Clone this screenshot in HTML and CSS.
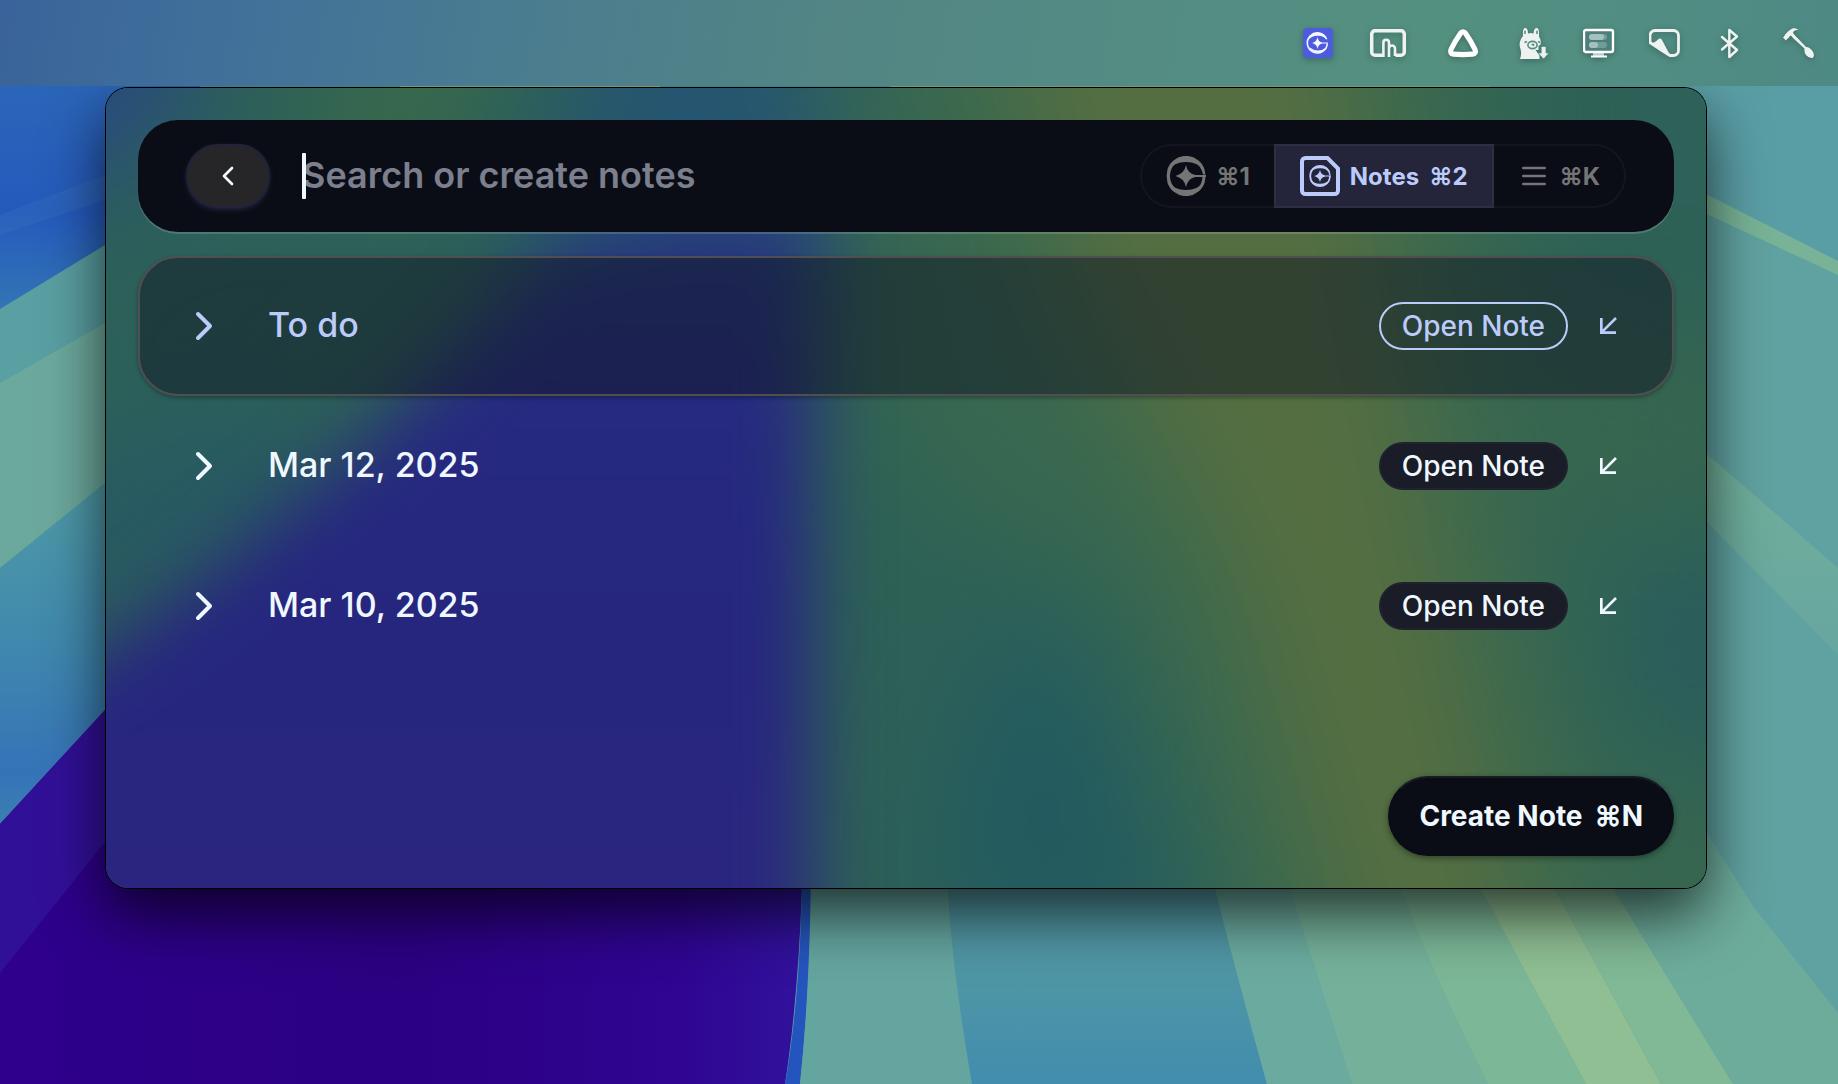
FILE: index.html
```html
<!DOCTYPE html>
<html lang="en">
<head>
<meta charset="utf-8">
<title>Notes</title>
<meta name="viewport" content="width=device-width, initial-scale=1">
<link rel="stylesheet" href="styles.css">
</head>
<body>
<svg class="wallpaper" viewBox="0 0 1838 1084" preserveAspectRatio="none" aria-hidden="true">
  <defs>
    <linearGradient id="sky" x1="0" y1="0" x2="0" y2="1"><stop offset="0" stop-color="#2c66b8"/><stop offset=".55" stop-color="#255abd"/><stop offset="1" stop-color="#3478b4"/></linearGradient>
    <linearGradient id="sea" x1="0" y1="0" x2="0" y2="1"><stop offset="0" stop-color="#4f9ba6"/><stop offset=".5" stop-color="#3f87ae"/><stop offset=".85" stop-color="#3573b8"/><stop offset="1" stop-color="#3a80b0"/></linearGradient>
    <linearGradient id="deep" x1="0" y1="0" x2="1" y2="0"><stop offset="0" stop-color="#2e008c"/><stop offset=".5" stop-color="#2c0082"/><stop offset=".85" stop-color="#2f0592"/><stop offset="1" stop-color="#31129c"/></linearGradient>
    <linearGradient id="edge" x1="0" y1="0" x2="1" y2="0"><stop offset="0" stop-color="#64a5a0"/><stop offset="1" stop-color="#5298a8"/></linearGradient>
    <linearGradient id="mid" x1="0" y1="0" x2="0" y2="1"><stop offset="0" stop-color="#5499a2"/><stop offset=".5" stop-color="#4e96a6"/><stop offset="1" stop-color="#428cae"/></linearGradient>
    <linearGradient id="fade" x1="0" y1="0" x2="0" y2="1"><stop offset="0" stop-color="#72b09a"/><stop offset="1" stop-color="#66a6a0"/></linearGradient>
  </defs>
  <rect width="1838" height="1084" fill="#60a2a1"/>
  <path d="M0 80H940V320H0Z" fill="url(#sky)"/>
  <path d="M0 215 105 175V200L0 235Z" fill="#3a74b8" opacity=".3"/>
  <path d="M0 309 105 245 400 90H840V700H0Z" fill="#5a9fa2"/>
  <path d="M0 383 105 323 V483L0 568Z" fill="#6ca99d"/>
  <path d="M0 568 105 483V710L0 824Z" fill="url(#sea)"/>
  <path d="M0 824 105 710H802V888Q798 1000 785 1084H0Z" fill="url(#deep)"/>
  <path d="M0 824 105 710V842L0 973Z" fill="#311098"/>
  <path d="M802 880H811Q809 1000 800 1084H785Q800 1000 802 880Z" fill="#2455be"/>
  <path d="M811 880H947Q952 970 972 1084H800Q811 980 811 880Z" fill="#65a59f"/>
  <path d="M947 880H1213Q1230 950 1267 1084H972Q952 970 947 880Z" fill="url(#mid)"/>
  <path d="M1213 880H1287L1352 1084H1267Q1230 950 1213 880Z" fill="#6bab9f"/>
  <path d="M1287 880H1397Q1435 980 1488 1084H1352Z" fill="#75b19a"/>
  <path d="M1397 880H1476L1586 1084H1488Q1435 980 1397 880Z" fill="#7cb797"/>
  <path d="M1476 880H1550L1661 1084H1586Z" fill="#8fbf93"/>
  <path d="M1550 880H1608L1733 1084H1661Z" fill="#81b895"/>
  <path d="M1608 880 1700 822 1755 909 1838 1013V1084H1733Z" fill="#6dac9b"/>
  <path d="M940 80H1838V261L1706 194Z" fill="url(#edge)"/>
  <path d="M1500 86H1838V261L1706 194 1500 100Z" fill="#5a9ea5"/>
  <path d="M1700 191 1838 261V275L1700 211Z" fill="#78b397"/>
  <path d="M1700 448 1838 568V655L1700 515Z" fill="url(#fade)"/>
  <path d="M200 86H890V90H200Z" fill="#4a8f9c"/>
  <path d="M400 86H660V90H400ZM890 86H1490V90H890Z" fill="#7fb092"/>
</svg>

<header class="menubar">
  <svg class="menu-icon" width="32" height="32" viewBox="0 0 32 32"><rect x="0" y="1" width="30" height="30" rx="4" fill="#4c5cdc"/><path d="M24.500 13.500A10 10 0 0 0 5 13.500A11 9 0 0 1 24.500 13.500Z" fill="#f4f6ff"/><path d="M24.300 16.500A10 10 0 1 1 23.500 12" fill="none" stroke="#f4f6ff" stroke-width="1.600"/><path d="M6 20A10 10 0 0 0 24 20Q15 27 6 20Z" fill="#f4f6ff"/><path d="M14.500 10Q15.200 15 19.500 15.500H25V16.500H19.500Q15.200 17 14.500 22Q13.800 17 9 16Q13.800 15 14.500 10Z" fill="#f4f6ff"/></svg>
  <svg class="menu-icon" width="42" height="32" viewBox="0 0 42 32" fill="none" stroke="#eef3f2" stroke-width="3.500"><path d="M14 28.200H6a3.300 3.300 0 0 1-3.300-3.300V7A3.300 3.300 0 0 1 6 3.700H32A3.300 3.300 0 0 1 35.300 7V25A3.300 3.300 0 0 1 32 28.200H26.500"/><path d="M14.400 30V15.500a2.800 2.800 0 0 1 5.600 0V30M20 24V21.500a3 3 0 0 1 6 0V29" stroke-width="2.600"/></svg>
  <svg class="menu-icon" width="36" height="32" viewBox="0 0 36 32"><path d="M18 4.800C19 4.800 20 5.400 20.600 6.400C23.500 10.500 27.500 17 30 22.500C31.200 25.200 29.800 27 27.600 27.200Q18 28 8.400 27.200C6.200 27 4.800 25.200 6 22.500C8.500 17 12.500 10.500 15.400 6.400C16 5.400 17 4.800 18 4.800Z" fill="none" stroke="#fff" stroke-width="5.200"/></svg>
  <svg class="menu-icon" width="34" height="32" viewBox="0 0 34 32"><path d="M5 32Q7 27 5.500 22Q3.500 17 6 12Q7 10 8 9Q7.500 1 10 1Q13 1 13 6.500Q15.500 5.500 18.500 6.500Q19 .5 22 1Q24.500 1.500 24 9.500Q26.500 13 25.500 17.500L23.500 19V23H20.500L24.500 28.500V32Z" fill="#edf2f1"/><path d="M10 3.800V7M22 3.800V7" stroke="#558d84" stroke-width="1.600"/><ellipse cx="17.500" cy="18" rx="4.600" ry="3.600" fill="none" stroke="#558d84" stroke-width="1.600"/><path d="M9.500 15.500 12 14.500M23 14.500 25 15.500M16.500 17.500H18.500V19" stroke="#558d84" stroke-width="1.500" fill="none"/><path d="M26.200 19.500H31V26H34L28.600 32 23 26H26.200Z" fill="#edf2f1" stroke="#558d84" stroke-width=".8"/></svg>
  <svg class="menu-icon" width="32" height="32" viewBox="0 0 32 32"><path d="M10 26H21V29H10Z" fill="#b8cfca"/><rect x="1" y="3" width="29" height="22" rx="2" fill="#4a8079" stroke="#fff" stroke-width="2.400"/><rect x="6" y="7" width="18" height="6" rx="3" fill="#6d9d96"/><rect x="6" y="7" width="15" height="6" rx="3" fill="#a6c1bd"/><rect x="6" y="15" width="18" height="6" rx="3" fill="#6d9d96"/><rect x="6" y="15" width="9" height="6" rx="3" fill="#a6c1bd"/><path d="M8 29.500H24" stroke="#fff" stroke-width="2"/></svg>
  <svg class="menu-icon" width="32" height="32" viewBox="0 0 32 32"><path d="M1 15.500V8.500A5 5 0 0 1 6 3.500H24.500A5 5 0 0 1 29.500 8.500V23.500A5 5 0 0 1 24.500 28.500H21Q15 25 1 15.500Z" fill="none" stroke="#eef3f2" stroke-width="2.800" stroke-linejoin="round"/><path d="M1 16.500Q6 16 9 12.500Q11.500 10.500 13 13L21.500 29Q11 23.500 1 16.500Z" fill="#eef3f2"/></svg>
  <svg class="menu-icon" width="30" height="32" viewBox="0 0 30 32"><path d="M7 10 22 23 14.300 30V3L22 9.500 7 22.500" fill="none" stroke="#eef3f2" stroke-width="2.400" stroke-linejoin="round" stroke-linecap="round"/></svg>
  <svg class="menu-icon" width="36" height="32" viewBox="0 0 36 32"><path d="M5 9.500Q9 3 14 1.300Q17 .8 19.500 2.800Q14 3 14 6L16 8.500 27 20Q31 20 34 25Q36 29 33.500 31Q30 31.500 27 28Q25 25 25.500 21.500L14 11 12 8.500Q10 9 9.500 11L8 12 7 13.500 4 10.500Z" fill="#eef3f2"/></svg>
</header>

<main class="panel">
  <svg class="glass" viewBox="0 0 1600 800" preserveAspectRatio="none" aria-hidden="true">
    <defs>
      <filter id="soft" x="-30%" y="-30%" width="160%" height="160%" color-interpolation-filters="sRGB"><feGaussianBlur stdDeviation="36"/></filter>
      <filter id="softer" x="-30%" y="-30%" width="160%" height="160%" color-interpolation-filters="sRGB"><feGaussianBlur stdDeviation="56"/></filter>
      <linearGradient id="indigo" x1="0" y1="0" x2="0" y2="1"><stop offset="0" stop-color="#27387f"/><stop offset=".22" stop-color="#262a80"/><stop offset=".5" stop-color="#26267f"/><stop offset="1" stop-color="#2d2680"/></linearGradient>
    </defs>
    <rect width="1600" height="800" fill="#2e6157"/>
    <g filter="url(#softer)">
      <path d="M-150-150H120L60 60-150 140Z" fill="#284a80"/>
      <path d="M320-150H430L330 60 200 260-100 330V250L180 130Z" fill="#3d6c48"/>
      <path d="M60 100 420 90 300 260 60 360-100 350V240Z" fill="#2c6059"/>
      <path d="M500-150H720V200H420Z" fill="#255570"/>
      <path d="M-100 420 150 330 250 400-100 540Z" fill="#265866"/>
      <path d="M700-150H1380L1420 200 1460 500 1560 950H1130L980 500 800 400 740 160Z" fill="#386850"/>
      <path d="M870-150H1230L1290 200 1350 500 1450 950H1250L1120 500 960 200Z" fill="#546e41"/>
      <path d="M830 800 860 640 940 500 1020 640 1100 850H830Z" fill="#225a60"/>
      <path d="M1380 250H1650V430H1420Z" fill="#37664f"/>
      <ellipse cx="1600" cy="560" rx="70" ry="60" fill="#285a60"/>
      <path d="M1500 700H1700V900H1500Z" fill="#37664f"/>
    </g>
    <path filter="url(#soft)" d="M-150 650 0 560 128 465 246 366 363 250 440 165 560 130 706 130V950H-150Z" fill="url(#indigo)"/>
  </svg>

  <div class="searchbar">
    <button class="back" type="button" aria-label="Back"><svg width="32" height="32" viewBox="0 0 24 24" class="line"><path d="m15 18-6-6 6-6"/></svg></button>
    <div class="field">
      <input class="query" type="text" aria-label="Search or create notes" placeholder="Search or create notes">
      <span class="caret"></span>
    </div>
    <nav class="tabs" aria-label="Views">
      <button class="tab" type="button" aria-label="Assistant"><svg width="40" height="40" viewBox="0 0 40 40"><use href="#orbit"/></svg><span>⌘1</span></button>
      <button class="tab tab-active" type="button"><svg width="40" height="40" viewBox="0 0 40 40"><path d="M5.500 2H27.500L38 12.500V34.500A3.500 3.500 0 0 1 34.500 38H5.500A3.500 3.500 0 0 1 2 34.500V5.500A3.500 3.500 0 0 1 5.500 2Z" fill="none" stroke="currentColor" stroke-width="4"/><g transform="translate(9 9) scale(.55)"><use href="#orbit"/></g></svg><span>Notes</span><span>⌘2</span></button>
      <button class="tab" type="button" aria-label="Menu"><svg width="32" height="32" viewBox="0 0 24 24" class="line"><path d="M4 6h16M4 12h16M4 18h16"/></svg><span>⌘K</span></button>
    </nav>
  </div>

  <ul class="notes">
    <li class="note note-selected">
      <svg width="48" height="48" viewBox="0 0 24 24" class="line"><path d="m9 18 6-6-6-6"/></svg>
      <span class="title">To do</span>
      <button class="open" type="button">Open Note</button>
      <svg width="32" height="32" viewBox="0 0 24 24" class="line arrow"><path d="M18 6 7 17M18 17H7V6"/></svg>
    </li>
    <li class="note">
      <svg width="48" height="48" viewBox="0 0 24 24" class="line"><path d="m9 18 6-6-6-6"/></svg>
      <span class="title">Mar 12, 2025</span>
      <button class="open" type="button">Open Note</button>
      <svg width="32" height="32" viewBox="0 0 24 24" class="line arrow"><path d="M18 6 7 17M18 17H7V6"/></svg>
    </li>
    <li class="note">
      <svg width="48" height="48" viewBox="0 0 24 24" class="line"><path d="m9 18 6-6-6-6"/></svg>
      <span class="title">Mar 10, 2025</span>
      <button class="open" type="button">Open Note</button>
      <svg width="32" height="32" viewBox="0 0 24 24" class="line arrow"><path d="M18 6 7 17M18 17H7V6"/></svg>
    </li>
  </ul>

  <footer class="actions">
    <button class="create" type="button"><span>Create Note</span><span>⌘N</span></button>
  </footer>
</main>

<svg class="symbols" width="0" height="0" aria-hidden="true">
  <defs>
    <g id="orbit" fill="currentColor">
      <path d="M1 15A19.500 19.500 0 0 1 39 15Q32 6 20 6Q8 6 1 15Z"/>
      <path d="M1 25A19.500 19.500 0 0 0 39 25Q32 34 20 34Q8 34 1 25Z"/>
      <path d="M39.500 20A19.500 19.500 0 0 1 33 34.600L29 34.500A17 17 0 0 0 36.500 20Z"/>
      <path d="M7 5.500A19.800 19.800 0 0 0 7 34.500L10 33A17 17 0 0 1 10 7Z"/>
      <path d="M31 4 33 5.500Q38 10 39.500 18.500H37Q36 12 30 7Z"/>
      <path d="M20 9Q21.500 17.500 29.500 19H40V21H29.500Q21.500 22.500 20 31Q18.500 22.500 9.500 20Q18.500 17.500 20 9Z"/>
    </g>
  </defs>
</svg>
</body>
</html>
```
FILE: styles.css
```css
* {
  box-sizing: border-box;
}

body {
  margin: 0;
  min-height: 100vh;
  position: relative;
  overflow-x: hidden;
  background: #60a2a1;
  color: #f0f8ff;
  font-family: Inter, "Liberation Sans", sans-serif;
}

button,
input {
  font: inherit;
  color: inherit;
}

button {
  cursor: pointer;
}

svg {
  flex: none;
  display: block;
}

.symbols {
  position: absolute;
}

.line {
  fill: none;
  stroke: currentColor;
  stroke-width: 2;
  stroke-linecap: round;
  stroke-linejoin: round;
}

.arrow {
  stroke-linecap: butt;
  stroke-linejoin: miter;
}

.wallpaper {
  position: absolute;
  inset: 0;
  width: 100%;
  height: 100%;
}

.menubar {
  position: relative;
  z-index: 2;
  display: flex;
  justify-content: flex-end;
  align-items: center;
  gap: 34px;
  height: 86px;
  padding-right: 23px;
  background: linear-gradient(100deg, #39639a 0%, #40709a 12%, #4a7c90 28%, #528584 45%, #548d83 65%, #549080 78%, #4e8a84 100%);
}

.menu-icon {
  filter: drop-shadow(0 2px 3px rgba(0, 0, 0, 0.25));
}

.panel {
  position: relative;
  isolation: isolate;
  display: flex;
  flex-direction: column;
  min-height: 800px;
  margin: 2px 132px 0 106px;
  padding: 32px;
  border-radius: 22px;
  box-shadow: 0 0 0 1px #000, 0 26px 60px rgba(0, 0, 0, 0.7);
}

.glass {
  position: absolute;
  z-index: -1;
  inset: 0;
  width: 100%;
  height: 100%;
  border-radius: 22px;
}

.searchbar {
  display: flex;
  align-items: center;
  gap: 32px;
  padding: 24px 48px;
  border-radius: 40px;
  background: #0b0d16;
  box-shadow: 0 2px 0 rgba(255, 255, 255, 0.16);
}

.back {
  display: flex;
  align-items: center;
  justify-content: center;
  width: 84px;
  height: 64px;
  padding: 0;
  border: 2px solid #22233a;
  border-radius: 32px;
  background: #262629;
  box-shadow: 0 2px 4px #22233a;
}

.field {
  position: relative;
  flex: 1;
}

.query {
  display: block;
  width: 100%;
  height: 64px;
  padding: 0 0 2px;
  border: 0;
  outline: 0;
  background: none;
  font-size: 36px;
  font-weight: 600;
}

.query::placeholder {
  color: #7c7f8d;
  opacity: 1;
}

.caret {
  position: absolute;
  left: 0;
  top: 9px;
  width: 4px;
  height: 46px;
  border-radius: 1px;
  background: #f0f8ff;
}

.tabs {
  display: flex;
}

.tab {
  display: flex;
  align-items: center;
  gap: 10px;
  height: 64px;
  padding: 0 24px;
  border: 2px solid #14151f;
  background: none;
  color: #757575;
  font-size: 24px;
  font-weight: 700;
}

.tab:first-child {
  border-right: 0;
  border-radius: 32px 0 0 32px;
}

.tab:last-child {
  border-left: 0;
  border-radius: 0 32px 32px 0;
}

.tab-active {
  border-color: #2e2f45;
  background: #24253a;
  color: #bccbfa;
}

.notes {
  margin: 24px 0 0;
  padding: 0;
  list-style: none;
}

.note {
  display: flex;
  align-items: center;
  height: 140px;
  padding: 0 48px 0 40px;
  border: 2px solid transparent;
  border-radius: 40px;
}

.note-selected {
  border-color: #504e50;
  background: rgba(16, 22, 34, 0.5);
  color: #bccbfa;
  box-shadow: 0 2px 4px rgba(0, 0, 0, 0.3);
}

.title {
  flex: 1;
  margin-left: 40px;
  padding-bottom: 4px;
  font-size: 34px;
  font-weight: 500;
}

.open {
  height: 48px;
  margin-right: 24px;
  padding: 0 21px;
  border: 2px solid #20222e;
  border-radius: 24px;
  background: #1a1d27;
  font-size: 28px;
  font-weight: 500;
}

.note-selected .open {
  border-color: #bccbfa;
  background: none;
}

.actions {
  display: flex;
  justify-content: flex-end;
  margin-top: auto;
}

.create {
  display: flex;
  align-items: center;
  gap: 12px;
  height: 80px;
  padding: 0 29px;
  border: 2px solid #0b0d16;
  border-top-color: #181a24;
  border-radius: 40px;
  background: #0b0d16;
  box-shadow: 0 2px 6px rgba(0, 0, 0, 0.4);
  font-size: 28px;
  font-weight: 700;
}
```
